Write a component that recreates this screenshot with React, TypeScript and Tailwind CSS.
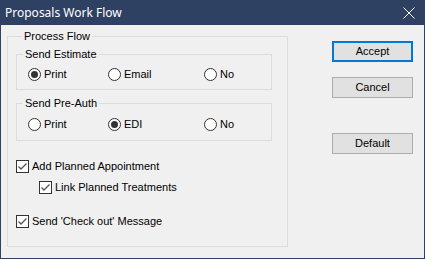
import React from "react";

function Radio({ checked, label, width }: { checked?: boolean; label: string; width?: string }) {
  return (
    <div className={`flex items-center ${width ?? ""}`}>
      <div className="w-[13px] h-[13px] rounded-full border border-[#333333] bg-white flex items-center justify-center shrink-0">
        {checked && <div className="w-[7px] h-[7px] rounded-full bg-[#333333]" />}
      </div>
      <span className="ml-[3px] leading-[13px]">{label}</span>
    </div>
  );
}

function Check({ label, className }: { label: string; className?: string }) {
  return (
    <div className={`flex items-center ${className ?? ""}`}>
      <div className="w-[13px] h-[13px] border border-[#333333] bg-white shrink-0 flex items-center justify-center">
        <svg width="11" height="11" viewBox="0 0 11 11">
          <path d="M1.5 5.5 L4 8 L9.5 2.5" fill="none" stroke="#555" strokeWidth="1.3" />
        </svg>
      </div>
      <span className="ml-[3px] leading-[13px]">{label}</span>
    </div>
  );
}

function Btn({ label, focused, className }: { label: string; focused?: boolean; className?: string }) {
  return (
    <div
      className={`w-[81px] h-[21px] bg-[#e1e1e1] flex items-center justify-center ${
        focused ? "border-2 border-[#0078d7]" : "border border-[#adadad]"
      } ${className ?? ""}`}
    >
      {label}
    </div>
  );
}

export default function App() {
  return (
    <div
      className="w-[425px] h-[259px] flex flex-col bg-[#f0f0f0] text-[11px] text-black"
      style={{ fontFamily: '"Liberation Sans", Arial, sans-serif' }}
    >
      <div className="h-[25px] bg-[#2f4163] flex items-center justify-between pl-[5px] pr-[10px] shrink-0">
        <span className="text-white text-[12px]" style={{ fontFamily: '"Noto Sans", sans-serif' }}>
          Proposals Work Flow
        </span>
        <svg width="12" height="12" viewBox="0 0 12 12">
          <path d="M0.5 0.5 L11.5 11.5 M11.5 0.5 L0.5 11.5" stroke="white" strokeWidth="1" />
        </svg>
      </div>
      <div className="flex-1 flex border-x border-b border-[#2f4163] pl-[6px]">
        <fieldset className="mt-[5px] w-[281px] h-[217px] border border-[#dcdcdc] px-[8px] min-w-0">
          <legend className="ml-[6px] px-[2px] leading-[13px]">Process Flow</legend>
          <fieldset className="mt-[5px] w-[256px] h-[42px] border border-[#dcdcdc] min-w-0">
            <legend className="ml-[6px] px-[2px] leading-[13px]">Send Estimate</legend>
            <div className="flex mt-[7px] pl-[11px]">
              <Radio checked label="Print" width="w-[80px]" />
              <Radio label="Email" width="w-[96px]" />
              <Radio label="No" />
            </div>
          </fieldset>
          <fieldset className="mt-[7px] w-[256px] h-[44px] border border-[#dcdcdc] min-w-0">
            <legend className="ml-[6px] px-[2px] leading-[13px]">Send Pre-Auth</legend>
            <div className="flex mt-[8px] pl-[11px]">
              <Radio label="Print" width="w-[80px]" />
              <Radio checked label="EDI" width="w-[96px]" />
              <Radio label="No" />
            </div>
          </fieldset>
          <Check label="Add Planned Appointment" className="mt-[19px]" />
          <Check label="Link Planned Treatments" className="mt-[8px] ml-[23px]" />
          <Check label="Send 'Check out' Message" className="mt-[21px]" />
        </fieldset>
        <div className="ml-[44px] flex flex-col pt-[16px]">
          <Btn label="Accept" focused />
          <Btn label="Cancel" className="mt-[15px]" />
          <Btn label="Default" className="mt-[35px]" />
        </div>
      </div>
    </div>
  );
}
